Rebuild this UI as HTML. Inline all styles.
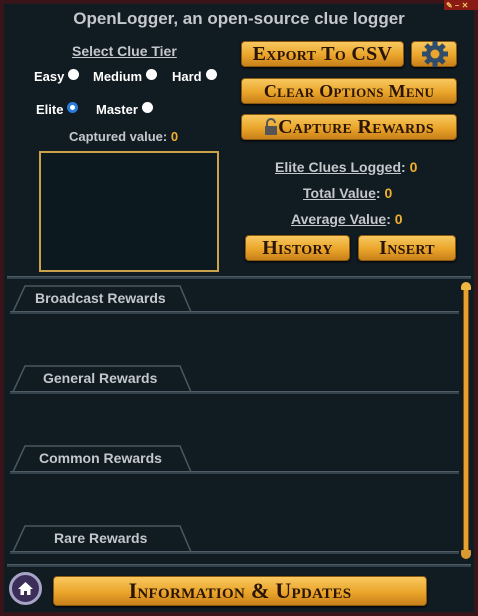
<!DOCTYPE html>
<html><head><meta charset="utf-8"><style>
*{margin:0;padding:0;box-sizing:border-box}
body{width:478px;height:616px;background:#3a1418;position:relative;overflow:hidden;font-family:"Liberation Sans",sans-serif;font-weight:bold;color:#d8d8d8}
#main{position:absolute;left:3px;top:3px;width:472px;height:610px;background:#111b22;border:1px solid #2a1a1e}
.a{position:absolute;white-space:nowrap}
.t{font-size:17px;color:#c4c8cc;left:0;width:478px;text-align:center;top:9px}
.u{text-decoration:underline}
.y{color:#f0b030}
.rad{display:inline-block;width:11px;height:11px;border-radius:50%;background:#fff;vertical-align:1px;margin-left:4px}
.sel{background:#fff;border:3px solid #2a7be0;}
.btn{position:absolute;height:26px;border-radius:4px;background:linear-gradient(#f8c860,#eaa52a 55%,#c8801a);border:1px solid #8a5a10;font-family:"Liberation Serif",serif;font-variant:small-caps;font-weight:bold;color:#2a1505;text-align:center;font-size:20px;line-height:24px;letter-spacing:.3px;box-shadow:0 1px 2px #000}
.line{position:absolute;height:3px;background:#34424c;border-top:1px solid #4d5c66}
.tab{position:absolute;width:180px;height:27px}
.tab span{position:absolute;top:5px;font-size:14px;color:#c4c8cc}
</style></head><body>
<div id="main"></div>
<div class="a" style="left:444px;top:0;width:34px;height:10px;background:#8a1a14"></div>
<div class="a" style="left:446px;top:1px;font-size:8px;color:#f0c060">✎ – ✕</div>
<div class="a t">OpenLogger, an open-source clue logger</div>
<div class="a u" style="left:72px;top:43px;font-size:14px;color:#c4c8cc">Select Clue Tier</div>
<div class="a" style="left:34px;top:69px;font-size:13px;color:#fff">Easy<span class="rad"></span></div>
<div class="a" style="left:93px;top:69px;font-size:13px;color:#fff">Medium<span class="rad"></span></div>
<div class="a" style="left:172px;top:69px;font-size:13px;color:#fff">Hard<span class="rad"></span></div>
<div class="a" style="left:36px;top:102px;font-size:13px;color:#fff">Elite<span class="rad sel"></span></div>
<div class="a" style="left:96px;top:102px;font-size:13px;color:#fff">Master<span class="rad"></span></div>
<div class="a" style="left:69px;top:129px;font-size:13px;color:#c4c8cc">Captured value: <span class="y">0</span></div>
<div class="a" style="left:39px;top:151px;width:180px;height:121px;border:2px solid #c9a24a;background:#0c1a20"></div>

<div class="btn" style="left:241px;top:41px;width:163px">Export To CSV</div>
<div class="btn" style="left:411px;top:41px;width:46px">
<svg width="30" height="30" viewBox="0 0 30 30" style="position:absolute;left:8px;top:-3px"><g fill="#2f4c6a"><circle cx="15" cy="15" r="9"/><g stroke="#2f4c6a" stroke-width="5"><line x1="15" y1="2" x2="15" y2="28"/><line x1="2" y1="15" x2="28" y2="15"/><line x1="6" y1="6" x2="24" y2="24"/><line x1="24" y1="6" x2="6" y2="24"/></g></g><circle cx="15" cy="15" r="4.5" fill="#eaa52a"/></svg></div>
<div class="btn" style="left:241px;top:78px;width:216px;font-size:18px">Clear Options Menu</div>
<div class="btn" style="left:241px;top:114px;width:216px"><svg width="14" height="17" viewBox="0 0 14 17" style="vertical-align:-2px"><path d="M3 8V5a4 4 0 0 1 8 0" fill="none" stroke="#555" stroke-width="2"/><rect x="1" y="8" width="12" height="9" fill="#555"/></svg>Capture Rewards</div>

<div class="a" style="left:275px;top:159px;font-size:14px;color:#c4c8cc"><span class="u">Elite Clues Logged</span>: <span class="y">0</span></div>
<div class="a" style="left:303px;top:185px;font-size:14px;color:#c4c8cc"><span class="u">Total Value</span>: <span class="y">0</span></div>
<div class="a" style="left:291px;top:211px;font-size:14px;color:#c4c8cc"><span class="u">Average Value</span>: <span class="y">0</span></div>
<div class="btn" style="left:245px;top:235px;width:105px">History</div>
<div class="btn" style="left:358px;top:235px;width:98px">Insert</div>

<div class="line" style="left:7px;top:276px;width:464px"></div>

<div class="tab" style="left:12px;top:285px"><svg width="180" height="27"><path d="M1 27 L13 1 H168 L179 27" fill="none" stroke="#4a5862" stroke-width="1.5"/></svg><span style="left:23px">Broadcast Rewards</span></div>
<div class="line" style="left:10px;top:311px;width:449px"></div>
<div class="tab" style="left:12px;top:365px"><svg width="180" height="27"><path d="M1 27 L13 1 H168 L179 27" fill="none" stroke="#4a5862" stroke-width="1.5"/></svg><span style="left:31px">General Rewards</span></div>
<div class="line" style="left:10px;top:391px;width:449px"></div>
<div class="tab" style="left:12px;top:445px"><svg width="180" height="27"><path d="M1 27 L13 1 H168 L179 27" fill="none" stroke="#4a5862" stroke-width="1.5"/></svg><span style="left:27px">Common Rewards</span></div>
<div class="line" style="left:10px;top:471px;width:449px"></div>
<div class="tab" style="left:12px;top:525px"><svg width="180" height="27"><path d="M1 27 L13 1 H168 L179 27" fill="none" stroke="#4a5862" stroke-width="1.5"/></svg><span style="left:42px">Rare Rewards</span></div>
<div class="line" style="left:10px;top:551px;width:449px"></div>

<div class="a" style="left:463px;top:284px;width:6px;height:274px;background:#e8a030;border-radius:3px;border:1px solid #7a5010"></div>
<div class="a" style="left:461px;top:282px;width:10px;height:8px;background:#f0b840;border-radius:5px 5px 1px 1px"></div>
<div class="a" style="left:461px;top:550px;width:10px;height:9px;background:#d89a30;border-radius:1px 1px 5px 5px"></div>

<div class="line" style="left:7px;top:564px;width:464px"></div>

<div class="a" style="left:9px;top:572px;width:33px;height:33px;border-radius:50%;background:#3b2f5a;border:3px solid #a8a4c8"></div>
<svg class="a" style="left:16px;top:579px" width="19" height="19" viewBox="0 0 19 19"><path d="M9.5 3 L2 10 H4.5 V16 H8 V12 H11 V16 H14.5 V10 H17 Z" fill="#fff"/></svg>
<div class="btn" style="left:53px;top:576px;width:374px;height:30px;line-height:28px;font-size:22px">Information &amp; Updates</div>
</body></html>
